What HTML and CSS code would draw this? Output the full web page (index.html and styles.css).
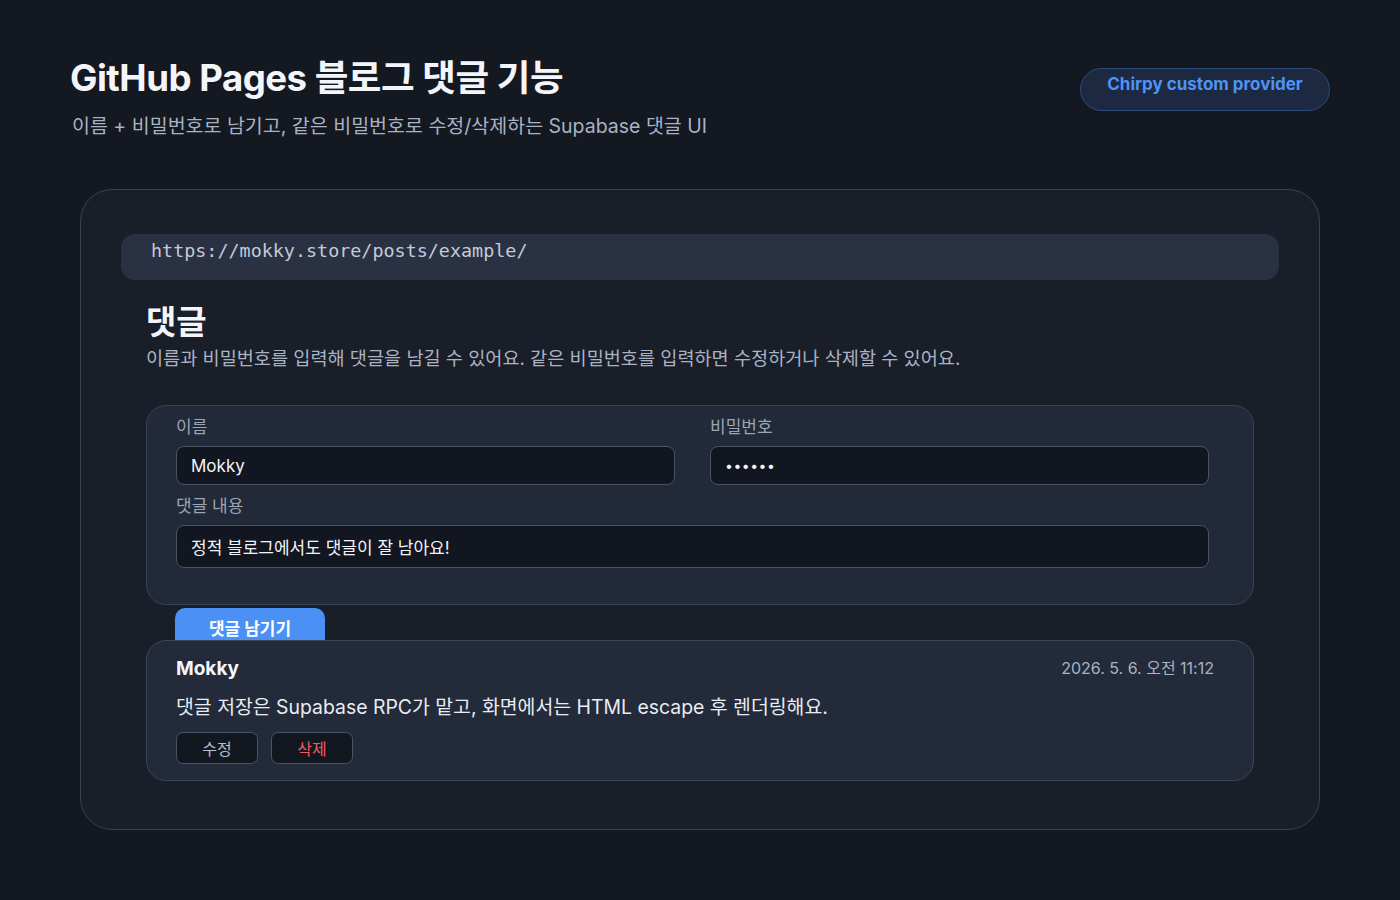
FILE: index.html
```html
<!DOCTYPE html>
<html lang="ko">
<head>
	<meta charset="UTF-8">
	<title>GitHub Pages 블로그 댓글 기능</title>
	<link rel="stylesheet" href="styles.css">
</head>
<body>
	<div class="page">
		<header class="top">
			<div class="top-text">
				<h1>GitHub Pages 블로그 댓글 기능</h1>
				<p class="sub">이름 + 비밀번호로 남기고, 같은 비밀번호로 수정/삭제하는 Supabase 댓글 UI</p>
			</div>
			<span class="badge">Chirpy custom provider</span>
		</header>

		<div class="card">
			<div class="url">https://mokky.store/posts/example/</div>

			<section class="comments">
				<h2>댓글</h2>
				<p class="desc">이름과 비밀번호를 입력해 댓글을 남길 수 있어요. 같은 비밀번호를 입력하면 수정하거나 삭제할 수 있어요.</p>

				<form class="form">
					<div class="row">
						<label class="field">
							<span class="label">이름</span>
							<input type="text" value="Mokky">
						</label>
						<label class="field">
							<span class="label">비밀번호</span>
							<input type="password" class="pw" value="123456">
						</label>
					</div>
					<label class="field">
						<span class="label">댓글 내용</span>
						<input type="text" class="body-input" value="정적 블로그에서도 댓글이 잘 남아요!">
					</label>
				</form>
				<button class="submit" type="button">댓글 남기기</button>

				<ul class="list">
					<li class="item">
						<div class="item-head">
							<strong class="author">Mokky</strong>
							<span class="date">2026. 5. 6. 오전 11:12</span>
						</div>
						<p class="text">댓글 저장은 Supabase RPC가 맡고, 화면에서는 HTML escape 후 렌더링해요.</p>
						<div class="actions">
							<button type="button" class="act">수정</button>
							<button type="button" class="act del">삭제</button>
						</div>
					</li>
				</ul>
			</section>
		</div>
	</div>
</body>
</html>
```

FILE: styles.css
```css
*{
	margin: 0;
	padding: 0;
	box-sizing: border-box;
}
ul,ol{
	list-style: none;
}
body{
	background-color: #141821;
	color: #e8ecf3;
	font-family: "Inter", "Noto Sans CJK KR", sans-serif;
}
.page{
	padding: 54px 70px 0 70px;
}
.top{
	display: flex;
	justify-content: space-between;
	align-items: flex-start;
}
.top h1{
	font-size: 36.6px;
	font-weight: 700;
	line-height: 48px;
	letter-spacing: -0.5px;
	color: #f3f5fa;
}
.top .sub{
	margin-top: 11px;
	font-size: 19.5px;
	line-height: 26px;
	color: #a9b3c4;
	padding-left: 2px;
}
.badge{
	margin-top: 14px;
	width: 250px;
	height: 43px;
	line-height: 31px;
	text-align: center;
	border-radius: 22px;
	background-color: #1d2941;
	border: 1px solid #2c4c80;
	color: #4d94f5;
	font-size: 17px;
	font-weight: 700;
}
.card{
	margin: 50px 10px 0 10px;
	padding: 44px 40px 48px 40px;
	background-color: #1a1e29;
	border: 1px solid #3a4150;
	border-radius: 32px;
}
.url{
	height: 46px;
	padding: 4px 30px 0 30px;
	background-color: #2a3143;
	border-radius: 14px;
	font-family: "DejaVu Sans Mono", monospace;
	font-size: 18.4px;
	line-height: 26px;
	color: #c3cad6;
}
.comments{
	padding: 0 25px;
}
.comments h2{
	margin-top: 20px;
	font-size: 33px;
	line-height: 44px;
	font-weight: 700;
	color: #f3f5fa;
}
.desc{
	margin-top: 1px;
	font-size: 18.6px;
	line-height: 26px;
	color: #a9b3c4;
}
.form{
	margin-top: 34px;
	padding: 10px 44px 36px 29px;
	background-color: #222938;
	border: 1px solid #3a4252;
	border-radius: 20px;
}
.row{
	display: grid;
	grid-template-columns: 1fr 1fr;
	gap: 35px;
}
.field{
	display: block;
	margin-bottom: 10px;
}
.label{
	display: block;
	font-size: 17px;
	line-height: 22px;
	color: #9ba5b6;
	margin-bottom: 8px;
}
.field input{
	display: block;
	width: 100%;
	height: 39px;
	padding: 0 14px;
	background-color: #121620;
	border: 1px solid #4a5264;
	border-radius: 8px;
	color: #f2f4f8;
	font-family: "Inter", "Noto Sans CJK KR", sans-serif;
	font-size: 17px;
	outline: none;
}
.field .pw{
	font-size: 14px;
	letter-spacing: 0.5px;
}
.field .body-input{
	height: 43px;
}
.field:last-child{
	margin-bottom: 0;
}
.submit{
	display: block;
	margin: 3px 0 0 29px;
	width: 150px;
	height: 42px;
	padding-bottom: 4px;
	background-color: #4b91f5;
	border: none;
	border-radius: 10px;
	color: #ffffff;
	font-family: "Inter", "Noto Sans CJK KR", sans-serif;
	font-size: 17px;
	font-weight: 700;
}
.list{
	margin-top: -10px;
}
.item{
	position: relative;
	padding: 14px 39px 16px 29px;
	background-color: #232a3a;
	border: 1px solid #3d4558;
	border-radius: 20px;
}
.item-head{
	display: flex;
	justify-content: space-between;
	align-items: center;
}
.author{
	font-size: 19px;
	line-height: 28px;
	font-weight: 700;
	color: #f3f5fa;
}
.date{
	font-size: 16px;
	line-height: 24px;
	margin-bottom: 3px;
	color: #a9b3c4;
}
.text{
	margin-top: 10px;
	font-size: 19.4px;
	line-height: 28px;
	color: #e8ecf3;
}
.actions{
	display: flex;
	gap: 13px;
	margin-top: 11px;
}
.act{
	width: 82px;
	height: 32px;
	background-color: #131720;
	border: 1px solid #4a5264;
	border-radius: 7px;
	color: #b7bfcc;
	font-family: "Inter", "Noto Sans CJK KR", sans-serif;
	font-size: 16px;
}
.act.del{
	color: #f25b5e;
}
```
